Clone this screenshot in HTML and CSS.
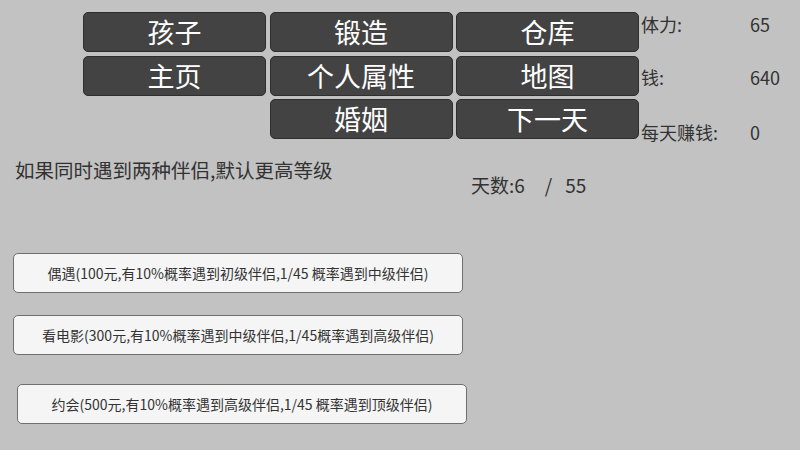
FILE: index.html
```html
<!DOCTYPE html>
<html lang="zh">
<head>
<meta charset="utf-8">
<link rel="stylesheet" href="styles.css">
</head>
<body>
<div class="top">
  <div class="menu">
    <button class="dark">孩子</button>
    <button class="dark">锻造</button>
    <button class="dark">仓库</button>
    <button class="dark">主页</button>
    <button class="dark">个人属性</button>
    <button class="dark">地图</button>
    <div class="empty"></div>
    <button class="dark">婚姻</button>
    <button class="dark">下一天</button>
  </div>
  <div class="stats">
    <div class="stat s1"><span class="label">体力:</span><span class="value">65</span></div>
    <div class="stat s2"><span class="label">钱:</span><span class="value">640</span></div>
    <div class="stat s3"><span class="label">每天赚钱:</span><span class="value">0</span></div>
  </div>
</div>
<div class="info">
  <div class="notice">如果同时遇到两种伴侣,默认更高等级</div>
  <div class="days"><span>天数:6</span><span class="slash">/</span><span>55</span></div>
</div>
<div class="options">
  <button class="light b1">偶遇(100元,有10%概率遇到初级伴侣,1/45 概率遇到中级伴侣)</button>
  <button class="light b2">看电影(300元,有10%概率遇到中级伴侣,1/45概率遇到高级伴侣)</button>
  <button class="light b3">约会(500元,有10%概率遇到高级伴侣,1/45 概率遇到顶级伴侣)</button>
</div>
</body>
</html>
```

FILE: styles.css
```css
html, body {
  margin: 0;
  padding: 0;
  width: 800px;
  height: 450px;
  overflow: hidden;
  background: #c2c2c2;
  font-family: "Noto Sans CJK SC", "Noto Sans", sans-serif;
  color: #323232;
}
button {
  font-family: inherit;
  padding: 0;
  margin: 0;
  cursor: pointer;
}
.top {
  display: flex;
  align-items: flex-start;
  padding-left: 83px;
  padding-top: 12px;
  height: 128px;
}
.menu {
  display: grid;
  grid-template-columns: 183px 183px 183px;
  grid-auto-rows: 40px;
  column-gap: 3.5px;
  row-gap: 3.6px;
}
.dark {
  background: #434343;
  border: 1px solid #2e2e2e;
  border-radius: 5px;
  color: #fff;
  font-size: 27px;
  line-height: 38px;
}
.stats {
  margin-left: 2px;
  display: flex;
  flex-direction: column;
}
.stat {
  display: flex;
  font-size: 18px;
  line-height: 26px;
  height: 26px;
}
.s1 { margin-top: -1px; }
.s2 { margin-top: 26.5px; }
.s3 { margin-top: 29px; }
.label {
  width: 109px;
}
.info {
  display: flex;
  margin-top: 18px;
  height: 39px;
}
.notice {
  margin-left: 15px;
  font-size: 19.5px;
  line-height: 24px;
  height: 24px;
  width: 456px;
}
.days {
  margin-top: 15px;
  font-size: 19px;
  line-height: 24px;
  height: 24px;
  display: flex;
}
.slash {
  margin: 0 13px 0 20px;
}
.options {
  display: flex;
  flex-direction: column;
  align-items: flex-start;
}
.light {
  width: 450px;
  height: 40px;
  background: #f5f5f5;
  border: 1px solid #6f6f6f;
  border-radius: 5px;
  color: #333;
  font-size: 14px;
}
.b1 { margin: 56px 0 0 13px; }
.b2 { margin: 22px 0 0 13px; }
.b3 { margin: 29px 0 0 17px; }
```
